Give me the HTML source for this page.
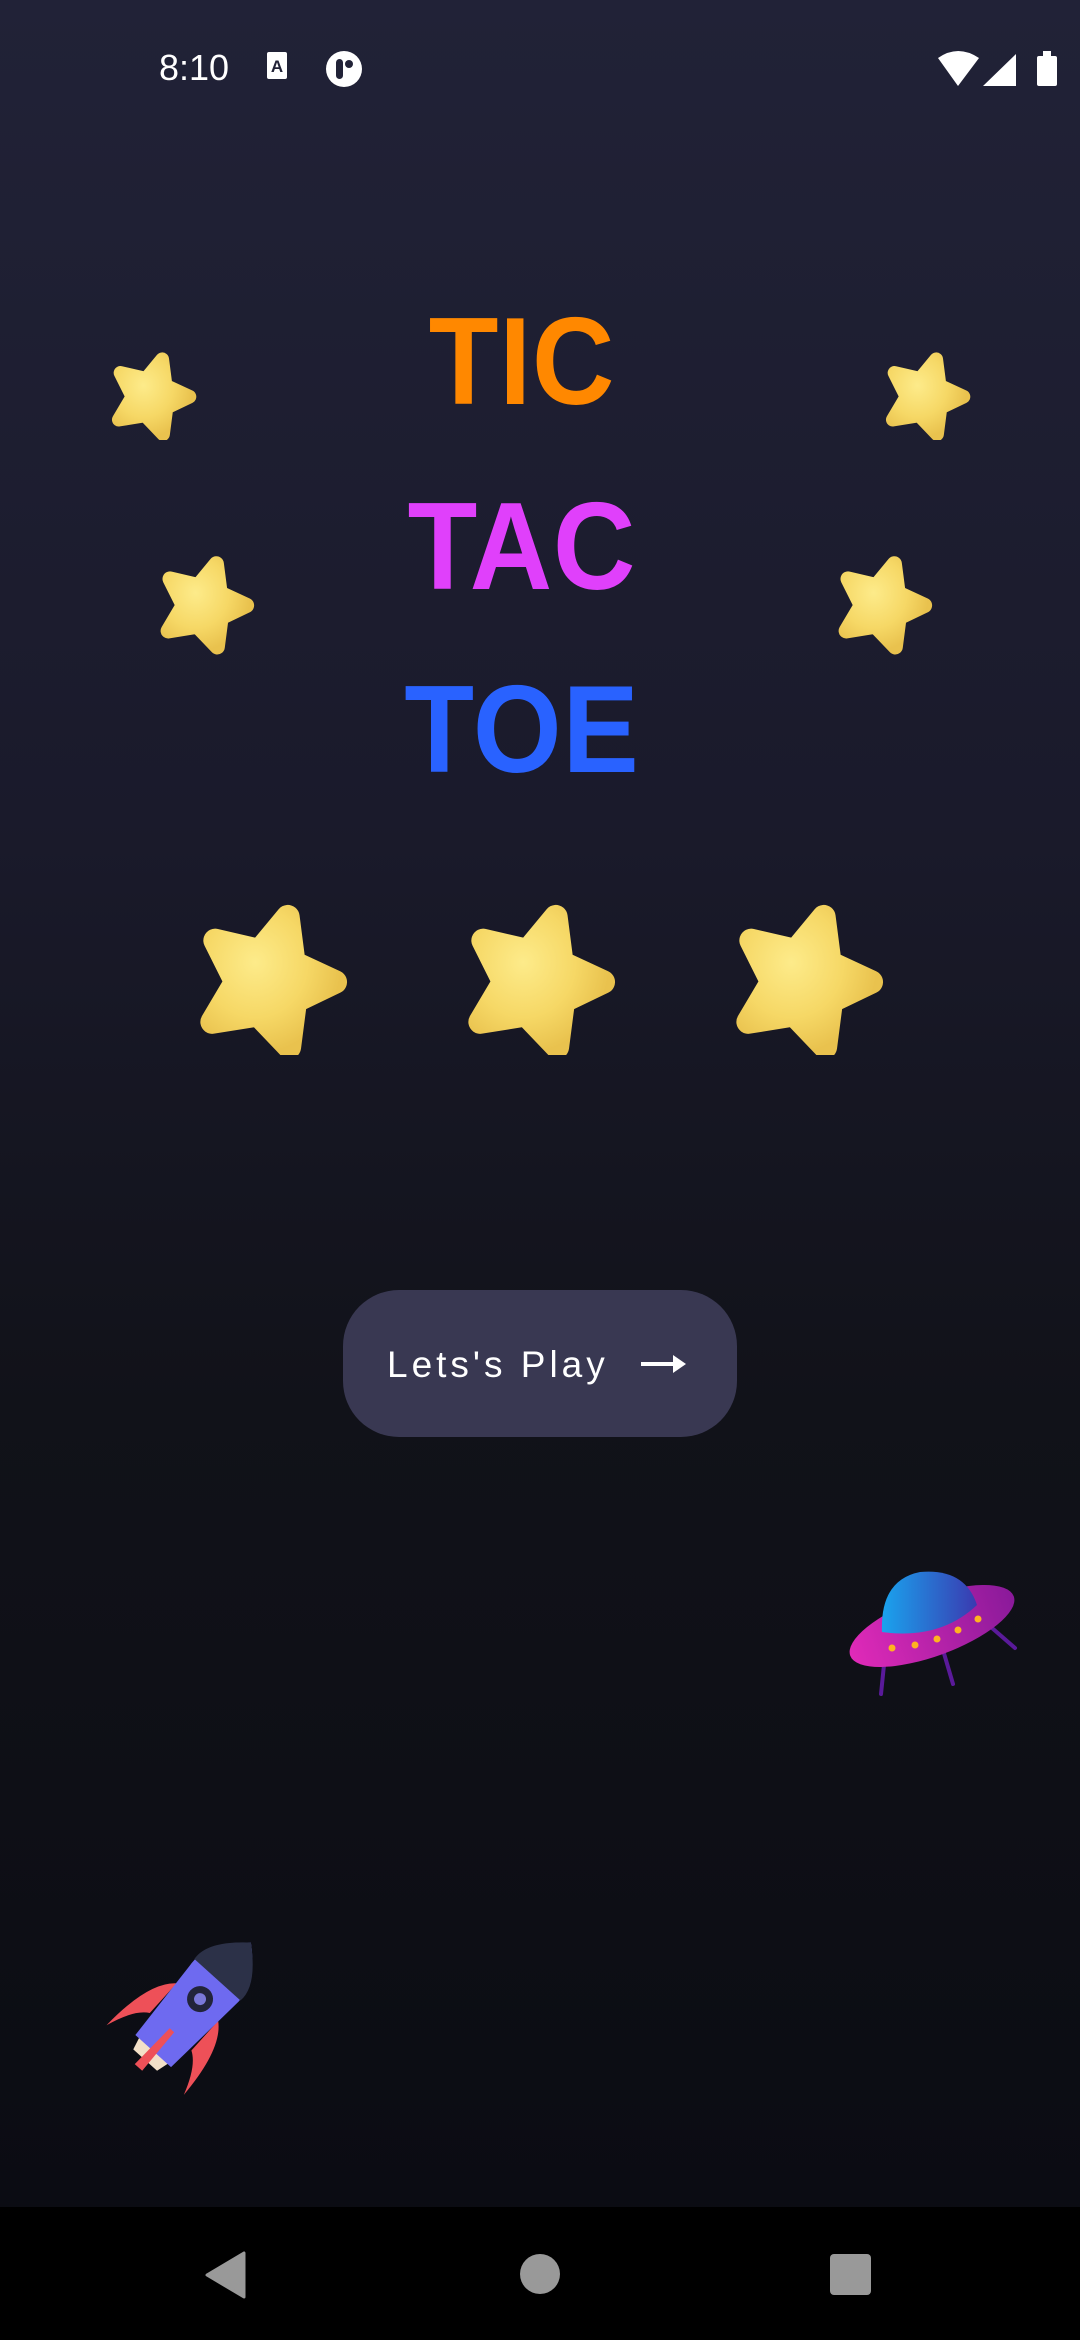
<!DOCTYPE html>
<html><head><meta charset="utf-8"><style>
html,body{margin:0;padding:0}
body{width:1080px;height:2340px;position:relative;overflow:hidden;background:linear-gradient(#212237 0%,#1a1a2b 35%,#111219 60%,#0b0c13 94%);font-family:"Liberation Sans",sans-serif}
.abs{position:absolute}
.title{position:absolute;left:0;width:1044px;text-align:center;font-weight:bold;font-size:124px;line-height:1;transform:scaleX(0.92);transform-origin:522px 0;letter-spacing:1px}
.nav{position:absolute;left:0;top:2207px;width:1080px;height:133px;background:#000}
</style></head><body>
<div class="abs" style="left:159px;top:47px;color:#fff;font-size:36px;">8:10</div>
<svg class="abs" style="left:266px;top:50px" width="24" height="32" viewBox="0 0 24 32"><rect x="1" y="2" width="20" height="27" rx="2" fill="#fff"/><text x="11" y="22" font-size="17" font-weight="bold" fill="#212237" text-anchor="middle" font-family="Liberation Sans">A</text></svg>
<svg class="abs" style="left:325px;top:50px" width="38" height="38" viewBox="0 0 38 38"><circle cx="19" cy="19" r="18" fill="#fff"/><rect x="11" y="9" width="7" height="20" rx="3.5" fill="#212237"/><circle cx="24" cy="14" r="4" fill="#212237"/></svg>
<svg class="abs" style="left:936px;top:50px" width="124" height="38" viewBox="0 0 124 38"><path d="M2 8 Q22 -6 43 8 L22 36 Z" fill="#fff"/><path d="M80 4 L80 36 L47 36 Z" fill="#fff"/><rect x="101" y="6" width="20" height="30" rx="2" fill="#fff"/><rect x="107" y="1" width="8" height="6" fill="#fff"/></svg>

<div class="title" style="top:300px;color:#ff8800">TIC</div>
<div class="title" style="top:485px;color:#e040fb">TAC</div>
<div class="title" style="top:668px;color:#2962ff">TOE</div>

<svg width="0" height="0" style="position:absolute"><defs>
<radialGradient id="sg" cx="35%" cy="35%" r="70%"><stop offset="0" stop-color="#fdeb8a"/><stop offset="0.6" stop-color="#f6d866"/><stop offset="1" stop-color="#e9c24e"/></radialGradient>
<symbol id="star" viewBox="-4 -4 108 104"><path d="M62 6 L66 37 L94 50 L67 63 L63 94 L42 72 L11 77 L27 50 L13 22 L43 29 Z" fill="url(#sg)" stroke="url(#sg)" stroke-width="16" stroke-linejoin="round"/></symbol>
</defs></svg>
<svg class="abs" style="left:106px;top:350px" width="92" height="90"><use href="#star"/></svg>
<svg class="abs" style="left:154px;top:552px" width="102" height="103"><use href="#star"/></svg>
<svg class="abs" style="left:880px;top:350px" width="92" height="90"><use href="#star"/></svg>
<svg class="abs" style="left:832px;top:552px" width="102" height="103"><use href="#star"/></svg>
<div class="abs" style="left:0;top:890px;width:1080px;height:165px;overflow:hidden">
<svg class="abs" style="left:190px;top:8px" width="160" height="162"><use href="#star"/></svg>
<svg class="abs" style="left:458px;top:8px" width="160" height="162"><use href="#star"/></svg>
<svg class="abs" style="left:726px;top:8px" width="160" height="162"><use href="#star"/></svg>
</div>

<div class="abs" style="left:343px;top:1290px;width:394px;height:147px;border-radius:56px;background:#393852"></div>
<div class="abs" style="left:387px;top:1343px;color:#fff;font-size:37px;letter-spacing:4px;line-height:44px">Lets's Play</div>
<svg class="abs" style="left:640px;top:1352px" width="48" height="24" viewBox="0 0 48 24"><rect x="1" y="10" width="34" height="4" fill="#fff"/><path d="M33 3 L46 12 L33 21 Z" fill="#fff"/></svg>

<svg class="abs" style="left:840px;top:1560px" width="190" height="150" viewBox="0 0 190 150">
<defs><linearGradient id="ud" x1="0" x2="1"><stop offset="0" stop-color="#1aa3ee"/><stop offset="1" stop-color="#3a3ab0"/></linearGradient>
<linearGradient id="ug" x1="0" x2="1"><stop offset="0" stop-color="#e02ab8"/><stop offset="1" stop-color="#8a1a9a"/></linearGradient></defs>
<g stroke="#5a1a9a" stroke-width="4" stroke-linecap="round"><line x1="45" y1="95" x2="41" y2="134"/><line x1="103" y1="90" x2="113" y2="124"/><line x1="152" y1="68" x2="175" y2="88"/></g>
<ellipse cx="92" cy="66" rx="87" ry="30" transform="rotate(-20 92 66)" fill="url(#ug)"/>
<path d="M42 72 Q40 20 80 12 Q125 8 137 45 Q100 80 42 72 Z" fill="url(#ud)"/>
<g fill="#ffb320"><circle cx="52" cy="88" r="3.5"/><circle cx="75" cy="85" r="3.5"/><circle cx="97" cy="79" r="3.5"/><circle cx="118" cy="70" r="3.5"/><circle cx="138" cy="59" r="3.5"/></g>
</svg>

<svg class="abs" style="left:60px;top:1930px" width="220" height="190" viewBox="0 0 220 190">
<g transform="translate(132 78) rotate(42)">
<path d="M-28 -8 Q-50 10 -52 70 Q-42 40 -28 32 Z" fill="#ee5058"/>
<path d="M28 -8 Q50 10 52 70 Q42 40 28 32 Z" fill="#ee5058"/>
<path d="M-20 55 L20 55 L16 70 L-16 70 Z" fill="#f3e0c8"/>
<path d="M0 -88 Q34 -60 30 -30 L24 58 L-24 58 L-30 -30 Q-34 -60 0 -88 Z" fill="#6e6af0"/>
<path d="M0 -88 Q34 -60 31 -38 L-31 -38 Q-34 -60 0 -88 Z" fill="#2c3148"/>
<circle cx="0" cy="-12" r="13" fill="#22243a"/><circle cx="0" cy="-12" r="6" fill="#7a78d8"/>
<path d="M-3 30 L3 30 L5 80 L-5 80 Z" fill="#ee5058"/>
</g></svg>

<div class="nav">
<svg class="abs" style="left:203px;top:44px" width="44" height="48" viewBox="0 0 44 48"><path d="M41 2 L41 46 L4 24 Z" fill="#999" stroke="#999" stroke-width="3" stroke-linejoin="round"/></svg>
<div class="abs" style="left:520px;top:47px;width:40px;height:40px;border-radius:50%;background:#999"></div>
<div class="abs" style="left:830px;top:47px;width:41px;height:41px;border-radius:4px;background:#999"></div>
</div>
</body></html>
